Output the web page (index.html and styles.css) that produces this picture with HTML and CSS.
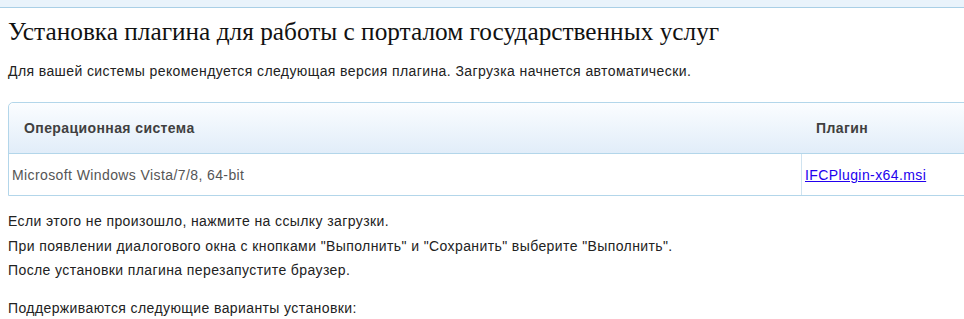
FILE: index.html
```html
<!DOCTYPE html>
<html>

<head>
  <title>Установка плагина</title>
  <meta charset="utf-8">
  <link rel="stylesheet" href="styles.css">
</head>

<body>
  <div class="topbar"></div>
  <div class="content">
    <h1>Установка плагина для работы с порталом государственных услуг</h1>
    <p class="lead">Для вашей системы рекомендуется следующая версия плагина. Загрузка начнется автоматически.</p>

    <table class="plugins">
      <thead>
        <tr>
          <th class="os">Операционная система</th>
          <th class="file">Плагин</th>
        </tr>
      </thead>
      <tbody>
        <tr>
          <td class="os">Microsoft Windows Vista/7/8, 64-bit</td>
          <td class="file"><a href="#">IFCPlugin-x64.msi</a></td>
        </tr>
      </tbody>
    </table>

    <p class="notes">
      Если этого не произошло, нажмите на ссылку загрузки.<br>
      При появлении диалогового окна с кнопками "Выполнить" и "Сохранить" выберите "Выполнить".<br>
      После установки плагина перезапустите браузер.
    </p>
    <p class="notes">Поддерживаются следующие варианты установки:</p>
  </div>
</body>

</html>
```

FILE: styles.css
```css
html,
body {
  overflow: hidden;
}

body {
  font-family: "Liberation Sans", Arial, sans-serif;
  font-size: 14px;
  letter-spacing: 0.4px;
  color: #222;
  margin: 0;
  padding: 0;
  background: #fff;
}

.topbar {
  height: 7px;
  background: #e9f3fb;
  border-bottom: 1px solid #a9cfe6;
}

.content {
  padding: 0 8px;
}

h1 {
  font-family: "Liberation Serif", "Times New Roman", serif;
  font-weight: normal;
  font-size: 25.3px;
  letter-spacing: 0;
  color: #111;
  margin: 8px 0 0;
  line-height: 30px;
}

.lead {
  margin: 17px 0 0;
  line-height: 17px;
}

.plugins {
  width: 1000px;
  margin-top: 22px;
  border-collapse: separate;
  border-spacing: 0;
  border: 1px solid #b3d6ea;
  border-radius: 5px 0 0 0;
}

.plugins th {
  height: 50px;
  padding: 0 16px 0 15px;
  text-align: left;
  font-weight: bold;
  color: #404040;
  background: linear-gradient(#fbfdff, #e1edf9);
  border-bottom: 1px solid #b3d6ea;
  border-radius: 5px 0 0 0;
}

.plugins th.os {
  width: 761px;
}

.plugins th.file {
  border-radius: 0;
}

.plugins td {
  height: 41px;
  padding: 0 4px 0 3px;
  color: #555;
}

.plugins td.file {
  border-left: 1px solid #cfe3f0;
}

.plugins a {
  color: #2200ee;
}

.notes {
  margin: 13px 0 0;
  line-height: 24.5px;
}

.notes + .notes {
  margin-top: 13px;
}
```
